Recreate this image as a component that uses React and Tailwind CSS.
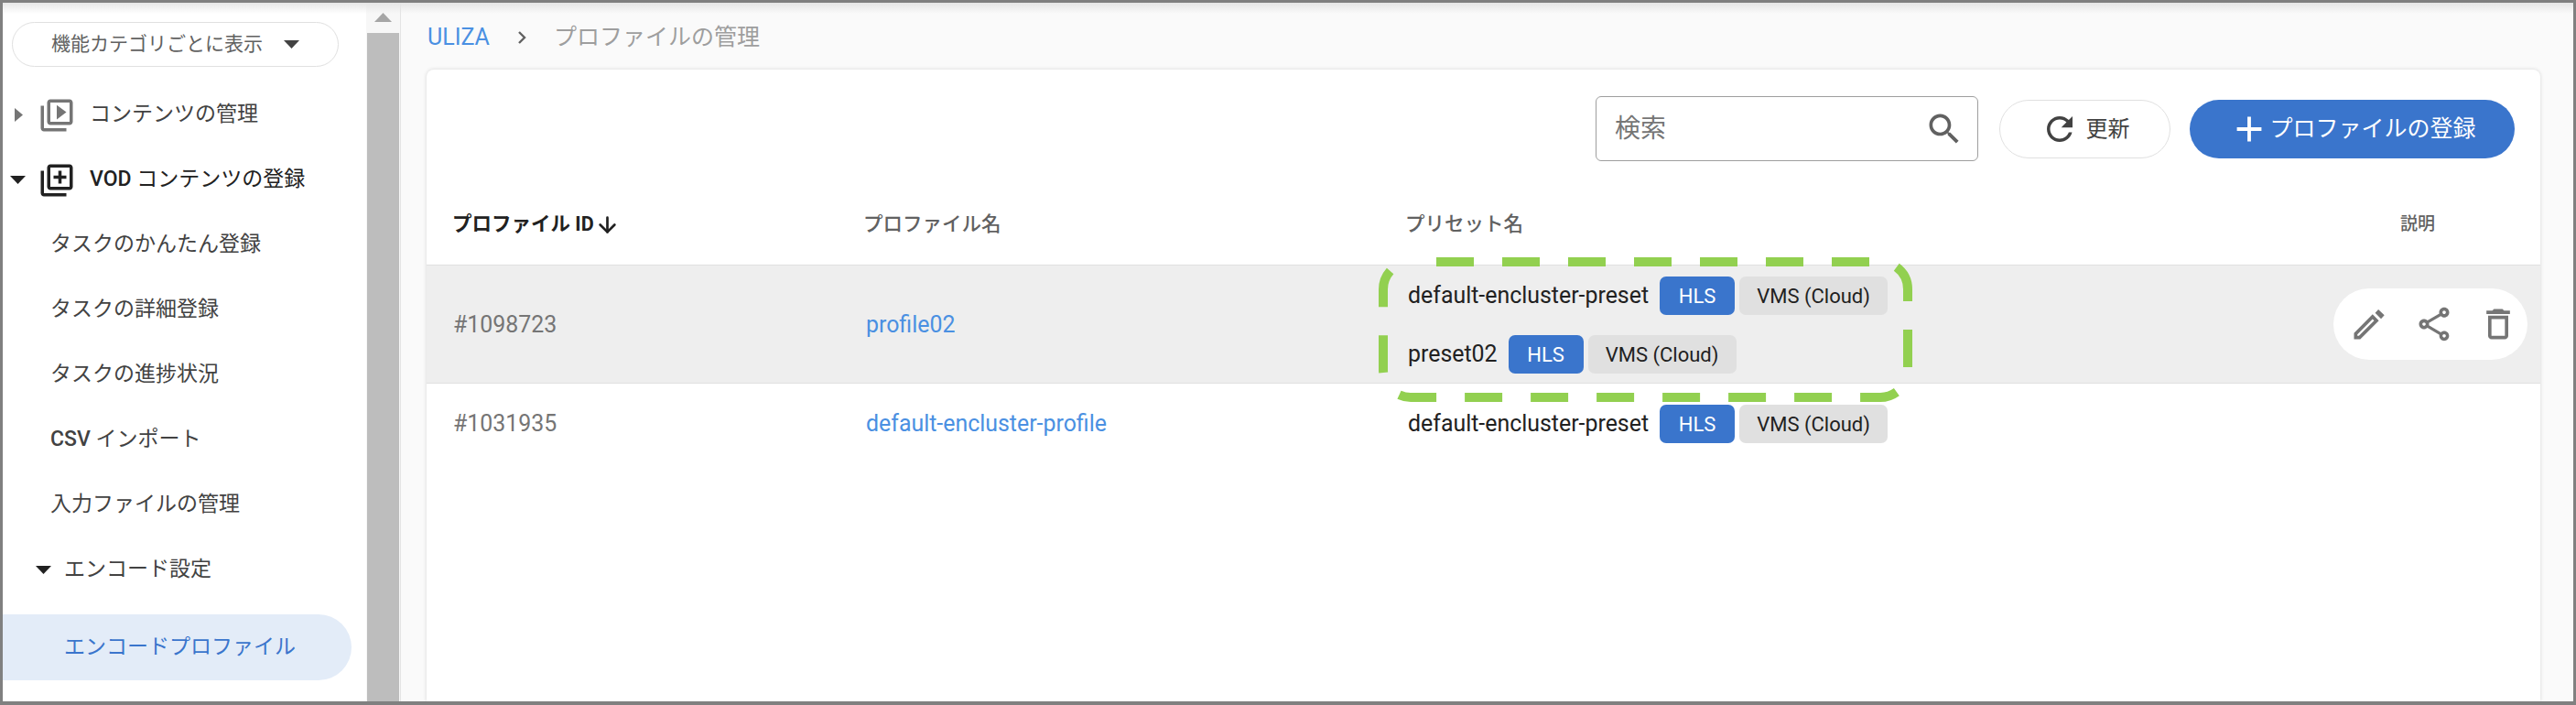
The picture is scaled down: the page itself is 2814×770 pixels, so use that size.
import { ArrowDown } from "lucide-react";

const paths = {
  video: "M4 6H2v14c0 1.1.9 2 2 2h14v-2H4V6zm16-4H8c-1.1 0-2 .9-2 2v12c0 1.1.9 2 2 2h12c1.1 0 2-.9 2-2V4c0-1.1-.9-2-2-2zm0 14H8V4h12v12zM12 5.5v9l6-4.5z",
  add: "M4 6H2v14c0 1.1.9 2 2 2h14v-2H4V6zm16-4H8c-1.1 0-2 .9-2 2v12c0 1.1.9 2 2 2h12c1.1 0 2-.9 2-2V4c0-1.1-.9-2-2-2zm0 14H8V4h12v12zm-7-2h2v-3h3V9h-3V6h-2v3h-3v2h3z",
  search: "M15.5 14h-.79l-.28-.27C15.41 12.59 16 11.11 16 9.5 16 5.91 13.09 3 9.5 3S3 5.91 3 9.5 5.91 16 9.5 16c1.61 0 3.09-.59 4.23-1.57l.27.28v.79l5 4.99L20.49 19l-4.99-5zm-6 0C7.01 14 5 11.99 5 9.5S7.01 5 9.5 5 14 7.01 14 9.5 11.99 14 9.5 14z",
  refresh: "M17.65 6.35C16.2 4.9 14.21 4 12 4c-4.42 0-7.99 3.58-7.99 8s3.57 8 7.99 8c3.73 0 6.84-2.55 7.73-6h-2.08c-.82 2.33-3.04 4-5.65 4-3.31 0-6-2.69-6-6s2.69-6 6-6c1.66 0 3.14.69 4.22 1.78L13 11h7V4l-2.35 2.35z",
  plus: "M19 13h-6v6h-2v-6H5v-2h6V5h2v6h6v2z",
  edit: "M3 17.25V21h3.75L17.81 9.94l-3.75-3.75L3 17.25zM5.92 19H5v-.92l9.06-9.06.92.92L5.92 19zM17.5 3.3l3.6 3.4-2 2.2-3.5-3.6z",
  share: "M18 16.08c-.76 0-1.44.3-1.96.77L8.91 12.7c.05-.23.09-.46.09-.7s-.04-.47-.09-.7l7.05-4.11c.54.5 1.25.81 2.04.81 1.66 0 3-1.34 3-3s-1.34-3-3-3-3 1.34-3 3c0 .24.04.47.09.7L8.04 9.81C7.5 9.31 6.79 9 6 9c-1.66 0-3 1.34-3 3s1.34 3 3 3c.79 0 1.5-.31 2.04-.81l7.12 4.16c-.05.21-.08.43-.08.65 0 1.61 1.31 2.92 2.92 2.92s2.92-1.31 2.92-2.92-1.31-2.92-2.92-2.92zM18 4c.55 0 1 .45 1 1s-.45 1-1 1-1-.45-1-1 .45-1 1-1zM6 13c-.55 0-1-.45-1-1s.45-1 1-1 1 .45 1 1-.45 1-1 1zm12 7.02c-.55 0-1-.45-1-1s.45-1 1-1 1 .45 1 1-.45 1-1 1z",
  trash: "M16 9v10H8V9h8m-1.5-6h-5l-1 1H5v2h14V4h-3.5l-1-1zM18 7H6v12c0 1.1.9 2 2 2h8c1.1 0 2-.9 2-2V7z",
};

function Icon({ name, className }) {
  return (
    <svg viewBox="0 0 24 24" fill="currentColor" className={className}>
      <path d={paths[name]} />
    </svg>
  );
}

function CaretDown({ className }) {
  return (
    <svg viewBox="0 0 17 9" fill="currentColor" className={className}>
      <polygon points="0,0 17,0 8.5,9" />
    </svg>
  );
}

function Preset({ name }) {
  return (
    <div className="flex items-center h-[42px]">
      <span className="text-[#212121] mr-[12px]">{name}</span>
      <span className="flex items-center justify-center w-[82px] h-[42px] rounded-[7px] bg-[#3a75cc] text-white text-[22px]">HLS</span>
      <span className="flex items-center justify-center w-[162px] h-[42px] ml-[5px] rounded-[7px] bg-[#e0e0e0] text-[#212121] text-[22px]">VMS (Cloud)</span>
    </div>
  );
}

function Sidebar() {
  const subItems = [
    <span>タスクのかんたん登録</span>,
    <span>タスクの詳細登録</span>,
    <span>タスクの進捗状況</span>,
    <span><span className="font-medium">CSV</span> インポート</span>,
    <span>入力ファイルの管理</span>,
  ];

  return (
    <aside className="w-[397px] shrink-0 bg-white text-[23px] text-[#424242]">
      <div className="flex items-center h-[49px] w-[357px] ml-[10px] mt-[21px] pl-[42px] rounded-full border border-[#e0e0e0] text-[21px] text-[#616161]">
        機能カテゴリごとに表示
        <CaretDown className="w-[17px] h-[9px] ml-[23px] text-[#424242]" />
      </div>

      <div className="flex items-center h-[71px] mt-[17px] pl-[13px] text-[#424242]">
        <svg viewBox="0 0 9 15" fill="#757575" className="w-[9px] h-[15px]">
          <polygon points="0,0 9,7.5 0,15" />
        </svg>
        <Icon name="video" className="w-[42px] h-[42px] ml-[16px] text-[#757575]" />
        <span className="ml-[15px]">コンテンツの管理</span>
      </div>
      <div className="flex items-center h-[71px] pl-[8px] text-[#212121]">
        <CaretDown className="w-[17px] h-[9px]" />
        <Icon name="add" className="w-[42px] h-[42px] ml-[13px]" />
        <span className="ml-[15px]"><span className="font-medium">VOD</span> コンテンツの登録</span>
      </div>

      {subItems.map((item, i) => (
        <div key={i} className="flex items-center h-[71px] pl-[52px]">{item}</div>
      ))}

      <div className="flex items-center h-[71px] pl-[36px]">
        <CaretDown className="w-[17px] h-[9px] text-[#212121]" />
        <span className="ml-[14px]">エンコード設定</span>
      </div>
      <div className="flex items-center h-[72px] w-[381px] mt-[13px] pl-[67px] rounded-r-[36px] bg-[#e3ecf8] text-[#3a75cc]">
        エンコードプロファイル
      </div>
      <div className="flex items-center h-[71px] pl-[67px]">エンコードプリセット</div>
    </aside>
  );
}

function Scrollbar() {
  return (
    <div className="flex flex-col w-[38px] shrink-0 border-r border-[#e4e4e4] bg-[#f7f7f7]">
      <div className="flex items-center justify-center h-[33px] shrink-0">
        <svg viewBox="0 0 19 10" fill="#a6a6a6" className="w-[19px] h-[10px] mt-[-2px]">
          <polygon points="9.5,0 19,10 0,10" />
        </svg>
      </div>
      <div className="flex-1 bg-[#bdbdbd] mx-[1px]" />
    </div>
  );
}

function Toolbar() {
  return (
    <div className="flex items-center justify-end h-[100px] pt-[29px] pr-[28px]">
      <div className="flex items-center justify-between w-[418px] h-[71px] px-[20px] mr-[23px] rounded-[6px] border border-[#9e9e9e] text-[28px] text-[#757575]">
        検索
        <Icon name="search" className="w-[44px] h-[44px] mr-[-6px] text-[#616161]" />
      </div>
      <button className="flex items-center justify-center w-[187px] h-[64px] mr-[21px] rounded-full border border-[#e0e0e0] bg-white text-[24px] text-[#424242]">
        <Icon name="refresh" className="w-[42px] h-[42px] mr-[8px]" />
        更新
      </button>
      <button className="flex items-center justify-center w-[355px] h-[64px] rounded-full bg-[#3a75cc] text-[25px] text-white">
        <Icon name="plus" className="w-[46px] h-[46px] mr-[-1px]" />
        プロファイルの登録
      </button>
    </div>
  );
}

function Table() {
  return (
    <div className="text-[24.9px]">
      <div className="flex items-center h-[114px] pt-[26px] border-b border-[#e0e0e0] text-[21.5px] font-medium text-[#616161]">
        <div className="flex items-center w-[477px] pl-[28px] font-bold text-[#212121]">
          プロファイル ID
          <ArrowDown className="w-[27px] h-[27px] ml-[1px]" strokeWidth={2.4} />
        </div>
        <div className="w-[592px]">プロファイル名</div>
        <div className="flex-1">プリセット名</div>
        <div className="w-[153px] text-[19px]">説明</div>
      </div>

      <div className="relative flex items-center h-[129px] pt-[2px] border-b border-[#e0e0e0] bg-[#eeeeee]">
        <div className="w-[480px] pl-[29px] text-[#757575]">#1098723</div>
        <div className="w-[592px] text-[#4a90e2]">profile02</div>
        <div className="flex flex-col gap-[22px]">
          <Preset name="default-encluster-preset" />
          <Preset name="preset02" />
        </div>
        <div className="absolute left-[2083px] top-[25px] flex items-center justify-between w-[212px] h-[78px] pl-[17px] pr-[10px] rounded-full bg-white text-[#757575]">
          <Icon name="edit" className="w-[44px] h-[44px]" />
          <Icon name="share" className="w-[44px] h-[44px]" />
          <Icon name="trash" className="w-[44px] h-[44px]" />
        </div>
      </div>

      <div className="flex items-center h-[88px]">
        <div className="w-[480px] pl-[29px] text-[#757575]">#1031935</div>
        <div className="w-[592px] text-[#4a90e2]">default-encluster-profile</div>
        <Preset name="default-encluster-preset" />
      </div>
    </div>
  );
}

export default function App() {
  return (
    <div className="relative flex w-[2814px] h-[770px] overflow-hidden border-[3px] border-b-[4px] border-[#808080] font-['Roboto','Noto_Sans_CJK_JP',sans-serif]">
      <Sidebar />
      <Scrollbar />

      <main className="flex-1 flex flex-col min-w-0 bg-[#fafafa]">
        <div className="flex items-center h-[73px] shrink-0 pl-[29px] pt-[3px] text-[25px] text-[#9e9e9e]">
          <span className="text-[25px] text-[#4a90e2]">ULIZA</span>
          <svg viewBox="0 0 10 16" fill="none" stroke="#616161" strokeWidth="2.4" className="w-[10px] h-[16px] ml-[30px] mr-[30px]">
            <path d="M2 2l6 6-6 6" />
          </svg>
          プロファイルの管理
        </div>
        <section className="flex-1 ml-[28px] mr-[36px] rounded-t-[8px] bg-white shadow-[0_0_4px_rgba(0,0,0,0.15)] overflow-hidden">
          <Toolbar />
          <Table />
        </section>
      </main>

      {/* soft shadow under the cropped top edge */}
      <div className="absolute inset-x-0 top-0 h-[12px] bg-linear-to-b from-[#e6e6e6] to-transparent pointer-events-none" />

      {/* green dashed callout drawn over the table */}
      <svg className="absolute left-[1498px] top-[273px] w-[600px] h-[170px] pointer-events-none" viewBox="0 0 600 170" fill="none">
        <rect x="10" y="10" width="573" height="148" rx="30" stroke="#92d050" strokeWidth="10" strokeDasharray="41 31" strokeDashoffset="44" />
      </svg>
    </div>
  );
}
